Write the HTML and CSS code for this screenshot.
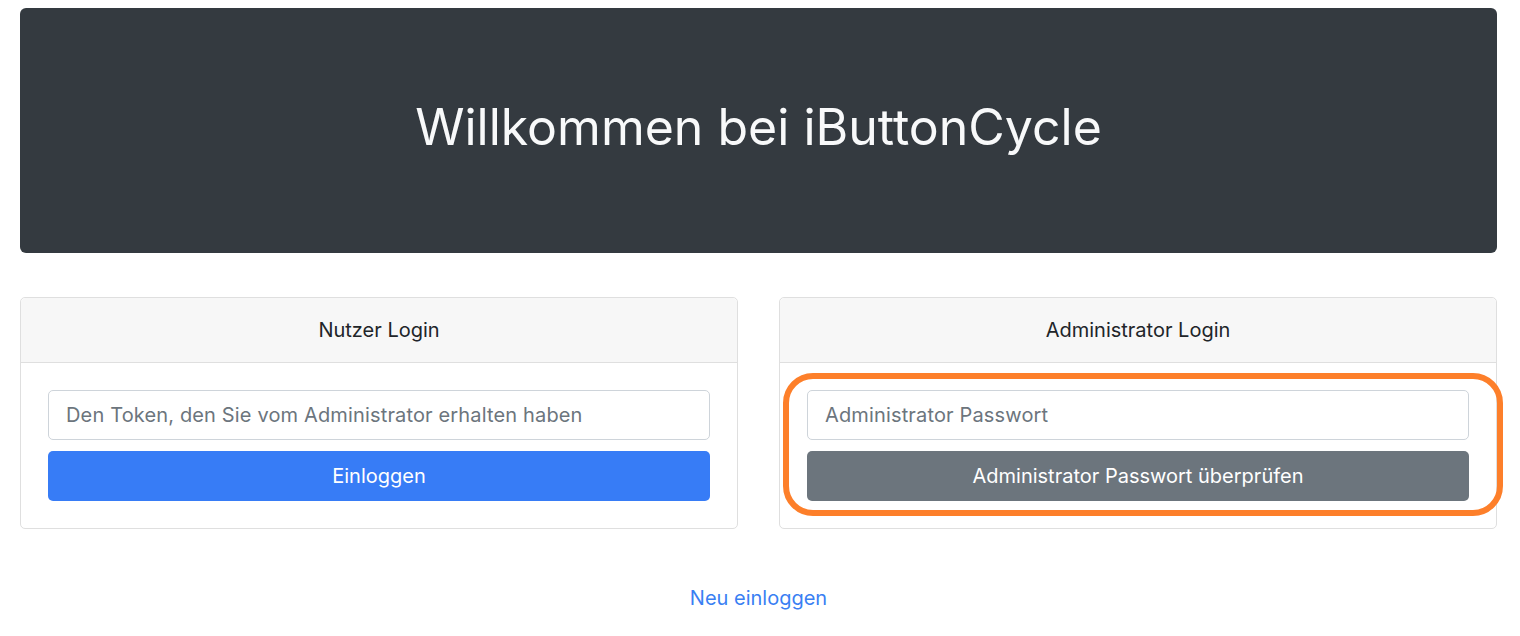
FILE: index.html
```html
<!DOCTYPE html>
<html lang="de">
<head>
<meta charset="utf-8">
<title>iButtonCycle</title>
<link rel="stylesheet" href="styles.css">
</head>
<body>
<div class="page">
  <header class="jumbo">
    <h1 class="jumbo-title">Willkommen bei iButtonCycle</h1>
  </header>
  <div class="cards">
    <section class="card">
      <div class="card-header">Nutzer Login</div>
      <div class="card-body">
        <input class="field" type="text" placeholder="Den Token, den Sie vom Administrator erhalten haben">
        <button class="btn btn-primary" type="button">Einloggen</button>
      </div>
    </section>
    <section class="card">
      <div class="card-header">Administrator Login</div>
      <div class="card-body highlight-host">
        <input class="field" type="password" placeholder="Administrator Passwort">
        <button class="btn btn-secondary" type="button">Administrator Passwort überprüfen</button>
        <div class="highlight"></div>
      </div>
    </section>
  </div>
  <div class="footer-link">
    <a href="#" class="link">Neu einloggen</a>
  </div>
</div>
</body>
</html>
```

FILE: styles.css
```css
* { box-sizing: border-box; }
html, body { margin: 0; padding: 0; background: #fff; }
body {
  font-family: Inter, "Liberation Sans", Arial, sans-serif;
  color: #212529;
}
.page {
  padding: 8px 23px 0 20px;
}
.jumbo {
  background: #343a40;
  border-radius: 6px;
  height: 245px;
  display: flex;
  align-items: center;
  justify-content: center;
}
.jumbo-title {
  margin: 0;
  color: #f8f9fa;
  font-weight: 400;
  font-size: 50px;
  line-height: 1.2;
  padding-bottom: 8px;
}
.cards {
  margin-top: 44px;
  display: grid;
  grid-template-columns: 1fr 1fr;
  column-gap: 41px;
}
.card {
  border: 1px solid #dfdfdf;
  border-radius: 5px;
  background: #fff;
}
.card-header {
  background: #f7f7f7;
  border-bottom: 1px solid #dfdfdf;
  border-radius: 5px 5px 0 0;
  height: 65px;
  display: flex;
  align-items: center;
  justify-content: center;
  font-size: 20px;
  color: #212529;
}
.card-body {
  padding: 27px 27px 27px 27px;
  display: flex;
  flex-direction: column;
  gap: 11px;
}
.highlight-host { position: relative; }
.field {
  display: block;
  width: 100%;
  height: 50px;
  border: 1px solid #ced4da;
  border-radius: 5px;
  padding: 0 17px;
  font-family: inherit;
  font-size: 20px;
  letter-spacing: 0.15px;
  color: #495057;
  background: #fff;
  outline: none;
}
.field::placeholder { color: #6c757d; opacity: 1; }
.btn {
  display: block;
  width: 100%;
  height: 50px;
  border: none;
  border-radius: 5px;
  font-family: inherit;
  font-size: 20px;
  color: #fff;
  cursor: pointer;
}
.btn-primary { background: #377cf6; }
.btn-secondary { background: #6c757d; }
.highlight {
  position: absolute;
  left: 3px;
  right: -7px;
  top: 10px;
  bottom: 12px;
  border: 6px solid #fd7f2a;
  border-radius: 30px;
  pointer-events: none;
}
.footer-link {
  display: flex;
  justify-content: center;
  margin-top: 57px;
}
.link {
  color: #3a7ff3;
  text-decoration: none;
  font-size: 20px;
}
```
